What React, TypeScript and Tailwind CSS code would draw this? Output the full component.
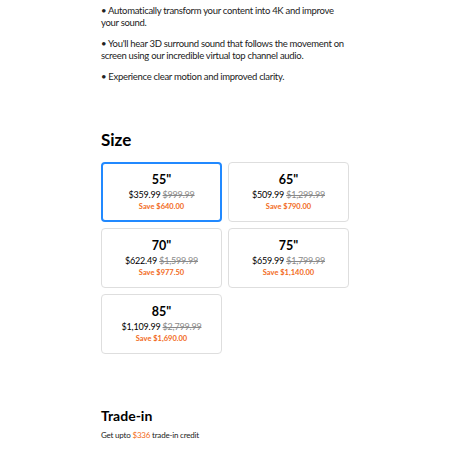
import React from "react";

const sizes = [
  { size: '55"', price: "$359.99", was: "$999.99", save: "Save $640.00", selected: true },
  { size: '65"', price: "$509.99", was: "$1,299.99", save: "Save $790.00" },
  { size: '70"', price: "$622.49", was: "$1,599.99", save: "Save $977.50" },
  { size: '75"', price: "$659.99", was: "$1,799.99", save: "Save $1,140.00" },
  { size: '85"', price: "$1,109.99", was: "$2,799.99", save: "Save $1,690.00" },
];

export default function App() {
  return (
    <div className="w-[450px] h-[450px] overflow-hidden bg-white text-black" style={{ fontFamily: 'Lato, sans-serif' }}>
      <div className="w-[248px] mx-auto pt-[5px]">
        <div className="text-[9.5px] leading-[12px] tracking-[-0.3px] text-[#222] flex flex-col gap-[9px]">
          <p>• Automatically transform your content into 4K and improve your sound.</p>
          <p>• You'll hear 3D surround sound that follows the movement on screen using our incredible virtual top channel audio.</p>
          <p>• Experience clear motion and improved clarity.</p>
        </div>
        <h2 className="mt-[47px] text-[17px] leading-[20px] font-bold">Size</h2>
        <div className="mt-[12px] grid grid-cols-2 gap-[6px]">
          {sizes.map((s) => (
            <div
              key={s.size}
              className={`h-[60px] rounded-[4px] flex flex-col items-center justify-center ${s.selected ? "border-2 border-[#2189ff]" : "border border-[#dedede]"}`}
            >
              <div className="text-[12.5px] leading-[15px] font-bold">{s.size}</div>
              <div className="text-[9px] leading-[13px] tracking-[-0.2px] mt-[1px]">
                {s.price} <span className="text-[#8a8a8a] line-through">{s.was}</span>
              </div>
              <div className="text-[7.5px] leading-[11px] font-bold text-[#f26b1d]">{s.save}</div>
            </div>
          ))}
        </div>
        <h2 className="mt-[53px] text-[14px] leading-[18px] font-bold">Trade-in</h2>
        <p className="mt-[5px] text-[8px] leading-[11px] tracking-[-0.2px] text-[#222]">
          Get upto <span className="text-[#f26b1d]">$336</span> trade-in credit
        </p>
      </div>
    </div>
  );
}
